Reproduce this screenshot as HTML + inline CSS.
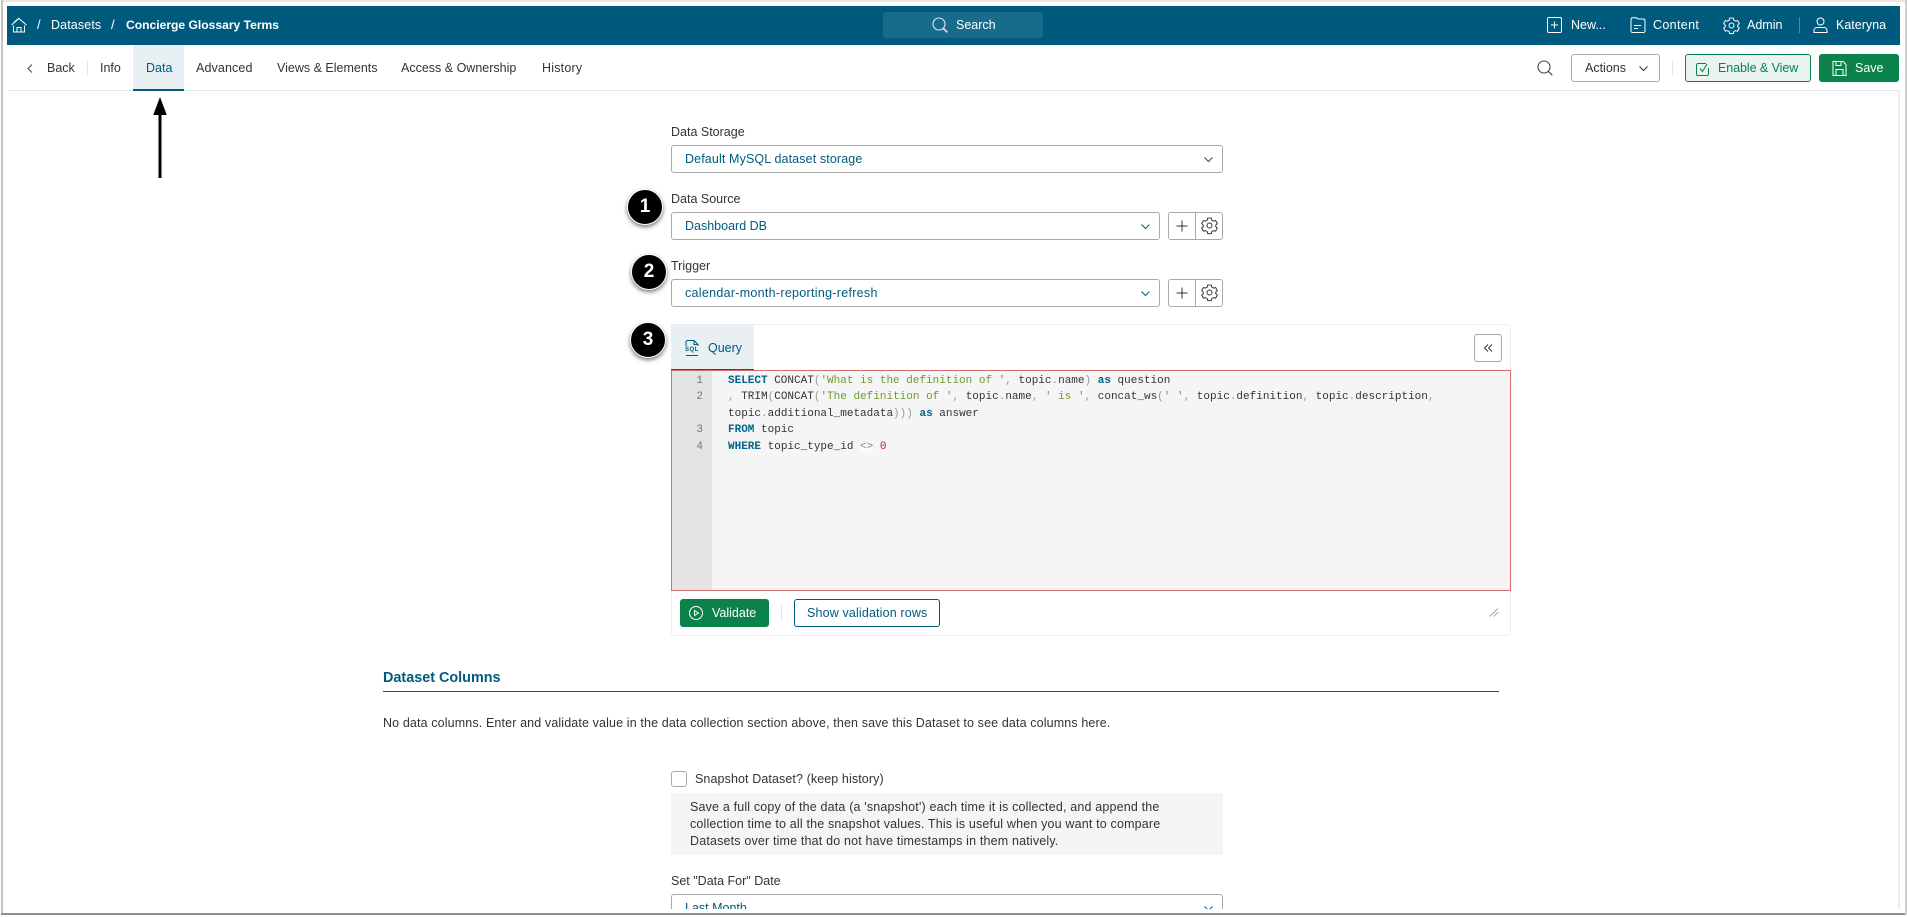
<!DOCTYPE html>
<html><head><meta charset="utf-8"><title>Concierge Glossary Terms</title>
<style>
html,body{margin:0;padding:0;width:1907px;height:917px;overflow:hidden;background:#fff}
body{position:relative;font-family:"Liberation Sans",sans-serif;font-size:13px;color:#333}
.a,.t{position:absolute;box-sizing:border-box}
.t{white-space:nowrap;line-height:16px;height:16px}
.w{color:#fff}.b{color:#005a7e}
.sel{position:absolute;box-sizing:border-box;background:#fff;border:1px solid #a9a9a9;border-radius:3px;height:28px}
svg{position:absolute;overflow:visible;fill:none}
.code{position:absolute;left:728px;font:11px/16.5px "Liberation Mono",monospace;color:#333;white-space:pre;height:16.5px}
.k{color:#00648c;font-weight:bold}.s{color:#6f9a2e}.p{color:#999}
.n{position:absolute;width:30px;left:673px;text-align:right;font:11px/16.5px "Liberation Mono",monospace;color:#777}
.badge{position:absolute;width:36px;height:36px;border-radius:50%;background:#000;border:1px solid #fff;box-sizing:border-box;box-shadow:0 2px 4px rgba(0,0,0,.55);color:#fff;font:bold 19px/34px "Liberation Sans",sans-serif;text-align:center}
</style></head><body>
<!-- frame -->
<div class="a" style="left:1px;top:0;width:1906px;height:2px;background:#e9e9e9"></div>
<div class="a" style="left:1px;top:0;width:2px;height:915px;background:#c4c4c4"></div>
<div class="a" style="left:1px;top:913px;width:1905px;height:2px;background:#8f8f8f"></div>
<div class="a" style="left:1905px;top:0;width:2px;height:915px;background:#d0d0d0"></div>
<div class="a" style="left:1898px;top:90px;width:2px;height:819px;background:#eeeeee"></div>

<!-- top bar -->
<div class="a" style="left:7px;top:6px;width:1893px;height:39px;background:#005a7e"></div>
<svg style="left:11px;top:17px" width="16" height="16" viewBox="0 0 16 16" stroke="#fff" stroke-width="1"><path d="M.5 8 8 1.500 15.500 8M2.500 8.500V15h11V8.500M6 15v-4.500h4V15M2.800 5.500 8 1"/></svg>
<div class="t w" style="left:37px;top:17px">/</div>
<div class="t w" style="left:51px;top:17px;font-size:12.500px;letter-spacing:.12px">Datasets</div>
<div class="t w" style="left:111px;top:17px">/</div>
<div class="t w" style="left:126px;top:17px;font-weight:bold;font-size:12.100px">Concierge Glossary Terms</div>
<div class="a" style="left:883px;top:12px;width:160px;height:26px;background:#196b8b;border-radius:3px"></div>
<svg style="left:932px;top:17px" width="16" height="16" viewBox="0 0 16 16" stroke="#dceaf0" stroke-width="1.100"><circle cx="7" cy="7" r="6"/><path d="m11.500 11.500 3.800 3.800" stroke-width="1.600"/></svg>
<div class="t w" style="left:956px;top:17px;font-size:12.500px">Search</div>

<svg style="left:1547px;top:17px" width="16" height="16" viewBox="0 0 16 16" stroke="#fff"><rect x=".5" y=".5" width="14" height="15" rx="1.500"/><path d="M7.500 4.500v7M4 8h7"/></svg>
<div class="t w" style="left:1571px;top:17px;font-size:12.500px">New...</div>
<svg style="left:1630px;top:17px" width="16" height="16" viewBox="0 0 16 16" stroke="#fff"><path d="M1 3.500V14a1.500 1.500 0 0 0 1.500 1.500h11A1.500 1.500 0 0 0 15 14V3.500a1.500 1.500 0 0 0-1.500-1.500H8L6.500.8H2.500A1.500 1.500 0 0 0 1 2.300zM4 8.500h7M4 11.500h4"/></svg>
<div class="t w" style="left:1653px;top:17px;font-size:12.500px;letter-spacing:.35px">Content</div>
<svg style="left:1723px;top:16.500px" width="17" height="17" viewBox="0 0 24 24" stroke="#fff" stroke-width="1.400"><circle cx="12" cy="12" r="3.500"/><path d="M9.500 1.500h5l.8 3 2.300 1.300 3-.8 2.400 4.300-2.200 2.200v2l2.200 2.200-2.400 4.300-3-.8-2.300 1.300-.8 3h-5l-.8-3-2.300-1.300-3 .8L1 15.700 3.200 13.500v-2L1 9.300 3.400 5l3 .8 2.300-1.300z"/></svg>
<div class="t w" style="left:1747px;top:17px;font-size:12.500px">Admin</div>
<div class="a" style="left:1799px;top:17px;width:1px;height:16px;background:#4f8aa3"></div>
<svg style="left:1813px;top:17px" width="15" height="16" viewBox="0 0 15 16" stroke="#fff"><circle cx="7.500" cy="4.500" r="3.500"/><path d="M1 15.500v-2c0-2 1.500-3 3-3h7c1.500 0 3 1 3 3v2z"/></svg>
<div class="t w" style="left:1836px;top:17px;font-size:12.500px">Kateryna</div>

<!-- tab row -->
<div class="a" style="left:7px;top:90px;width:1893px;height:1px;background:#e8e8e8"></div>
<div class="a" style="left:133px;top:45px;width:51px;height:46px;background:#e8f0f4;border-bottom:2px solid #005a7e"></div>
<svg style="left:27px;top:64px" width="6" height="9" viewBox="0 0 6 9" stroke="#444"><path d="M5 .5 1 4.500l4 4"/></svg>
<div class="t" style="left:47px;top:60px;font-size:12.500px">Back</div>
<div class="a" style="left:87px;top:60px;width:1px;height:16px;background:#e4e4e4"></div>
<div class="t" style="left:100px;top:60px;font-size:12.500px">Info</div>
<div class="t b" style="left:146px;top:60px;font-size:12.500px">Data</div>
<div class="t" style="left:196px;top:60px;font-size:12.500px;letter-spacing:.12px">Advanced</div>
<div class="t" style="left:277px;top:60px;font-size:12.500px">Views &amp; Elements</div>
<div class="t" style="left:401px;top:60px;font-size:12.500px">Access &amp; Ownership</div>
<div class="t" style="left:542px;top:60px;font-size:12.500px;letter-spacing:.2px">History</div>

<svg style="left:1537px;top:60px" width="16" height="16" viewBox="0 0 16 16" stroke="#444" stroke-width="1.100"><circle cx="7" cy="7" r="6"/><path d="m11.300 11.300 4 4"/></svg>
<div class="a" style="left:1571px;top:54px;width:89px;height:28px;border:1px solid #a9a9a9;border-radius:3px"></div>
<div class="t" style="left:1585px;top:60px;font-size:12.500px">Actions</div>
<svg style="left:1639px;top:66px" width="9" height="6" viewBox="0 0 9 6" stroke="#333"><path d="m.5.500 4 4 4-4"/></svg>
<div class="a" style="left:1672px;top:60px;width:1px;height:16px;background:#e4e4e4"></div>
<div class="a" style="left:1685px;top:54px;width:126px;height:28px;border:1px solid #0a824a;border-radius:3px;background:#e9f3ef"></div>
<svg style="left:1696px;top:62px" width="14" height="14" viewBox="0 0 14 14" stroke="#0a824a"><path d="M12.500 6v6a1.500 1.500 0 0 1-1.500 1.500H2A1.500 1.500 0 0 1 .5 12V3A1.500 1.500 0 0 1 2 1.500h8M4 6.500l2.500 3L11 2"/></svg>
<div class="t" style="left:1718px;top:60px;font-size:12.500px;color:#0a824a;letter-spacing:-.07px">Enable &amp; View</div>
<div class="a" style="left:1819px;top:54px;width:80px;height:28px;border-radius:3px;background:#0a824a"></div>
<svg style="left:1832px;top:61px" width="15" height="15" viewBox="0 0 15 15" stroke="#fff"><path d="M1 .5h10l3 3V14.500H1zM4 .5v4h5v-4M4 14.500V8.500h7v6"/></svg>
<div class="t w" style="left:1855px;top:60px;font-size:12.500px">Save</div>

<!-- arrow -->
<svg style="left:150px;top:95px" width="20" height="85"><path d="M10 2 16.800 20H3.200z" fill="#000"/><rect x="8.500" y="18" width="3" height="65" fill="#000"/></svg>

<!-- form -->
<div class="t" style="left:671px;top:124px;font-size:12.500px">Data Storage</div>
<div class="sel" style="left:671px;top:145px;width:552px"></div>
<div class="t b" style="left:685px;top:151px;font-size:12.500px;letter-spacing:.12px">Default MySQL dataset storage</div>
<svg style="left:1204px;top:157px" width="9" height="6" viewBox="0 0 9 6" stroke="#005a7e"><path d="m.5.500 4 4 4-4"/></svg>

<div class="t" style="left:671px;top:191px;font-size:12.500px">Data Source</div>
<div class="sel" style="left:671px;top:212px;width:489px"></div>
<div class="t b" style="left:685px;top:218px;font-size:12.500px">Dashboard DB</div>
<svg style="left:1141px;top:224px" width="9" height="6" viewBox="0 0 9 6" stroke="#005a7e"><path d="m.5.500 4 4 4-4"/></svg>
<div class="sel" style="left:1168px;top:212px;width:55px"></div>
<div class="a" style="left:1195px;top:212px;width:1px;height:28px;background:#a9a9a9"></div>
<svg style="left:1176px;top:220px" width="12" height="12" viewBox="0 0 12 12" stroke="#333"><path d="M6 .5v11M.5 6h11"/></svg>
<svg style="left:1201px;top:217px" width="17" height="17" viewBox="0 0 24 24" stroke="#333" stroke-width="1.400"><circle cx="12" cy="12" r="3.500"/><path d="M9.500 1.500h5l.8 3 2.300 1.300 3-.8 2.400 4.300-2.200 2.200v2l2.200 2.200-2.400 4.300-3-.8-2.300 1.300-.8 3h-5l-.8-3-2.300-1.300-3 .8L1 15.700 3.200 13.500v-2L1 9.300 3.400 5l3 .8 2.300-1.300z"/></svg>

<div class="t" style="left:671px;top:258px;font-size:12.500px">Trigger</div>
<div class="sel" style="left:671px;top:279px;width:489px"></div>
<div class="t b" style="left:685px;top:285px;font-size:12.500px;letter-spacing:.29px">calendar-month-reporting-refresh</div>
<svg style="left:1141px;top:291px" width="9" height="6" viewBox="0 0 9 6" stroke="#005a7e"><path d="m.5.500 4 4 4-4"/></svg>
<div class="sel" style="left:1168px;top:279px;width:55px"></div>
<div class="a" style="left:1195px;top:279px;width:1px;height:28px;background:#a9a9a9"></div>
<svg style="left:1176px;top:287px" width="12" height="12" viewBox="0 0 12 12" stroke="#333"><path d="M6 .5v11M.5 6h11"/></svg>
<svg style="left:1201px;top:284px" width="17" height="17" viewBox="0 0 24 24" stroke="#333" stroke-width="1.400"><circle cx="12" cy="12" r="3.500"/><path d="M9.500 1.500h5l.8 3 2.300 1.300 3-.8 2.400 4.300-2.200 2.200v2l2.200 2.200-2.400 4.300-3-.8-2.300 1.300-.8 3h-5l-.8-3-2.300-1.300-3 .8L1 15.700 3.200 13.500v-2L1 9.300 3.400 5l3 .8 2.300-1.300z"/></svg>

<!-- query panel -->
<div class="a" style="left:671px;top:324px;width:840px;height:312px;border:1px solid #eeeeee;border-radius:3px"></div>
<div class="a" style="left:671px;top:324px;width:83px;height:47px;background:#e8f0f4;border-bottom:2px solid #005a7e"></div>
<svg style="left:685px;top:340px" width="14" height="17" viewBox="0 0 14 17" stroke="#005a7e"><path d="M1 6V2a1.500 1.500 0 0 1 1.500-1.500H9L13 4.500V6M9 .5v4h4M1 15.500h12"/></svg>
<div class="t b" style="left:685px;top:346px;font:bold 6px/8px 'Liberation Sans',sans-serif;height:8px;letter-spacing:.5px">SQL</div>
<div class="t b" style="left:708px;top:340px;font-size:12.500px">Query</div>
<div class="a" style="left:1474px;top:334px;width:28px;height:28px;border:1px solid #a9a9a9;border-radius:3px"></div>
<svg style="left:1484px;top:344px" width="9" height="8" viewBox="0 0 9 8" stroke="#333"><path d="M4 .5.500 4 4 7.500M8 .5 4.500 4 8 7.500"/></svg>

<div class="a" style="left:671px;top:370px;width:840px;height:221px;border:1px solid #d46e6e;background:#f5f5f5"></div>
<div class="a" style="left:672px;top:371px;width:40px;height:219px;background:#e4e4e4"></div>
<div class="n" style="top:372.500px">1</div>
<div class="n" style="top:389px">2</div>
<div class="n" style="top:422px">3</div>
<div class="n" style="top:438.500px">4</div>
<div class="code" style="top:372.500px"><span class="k">SELECT</span> CONCAT<span class="p">(</span><span class="s">'What is the definition of '</span><span class="p">,</span> topic<span class="p">.</span>name<span class="p">)</span> <span class="k">as</span> question</div>
<div class="code" style="top:389px"><span class="p">,</span> TRIM<span class="p">(</span>CONCAT<span class="p">(</span><span class="s">'The definition of '</span><span class="p">,</span> topic<span class="p">.</span>name<span class="p">,</span> <span class="s">' is '</span><span class="p">,</span> concat_ws<span class="p">(</span><span class="s">' '</span><span class="p">,</span> topic<span class="p">.</span>definition<span class="p">,</span> topic<span class="p">.</span>description<span class="p">,</span></div>
<div class="code" style="top:405.500px">topic<span class="p">.</span>additional_metadata<span class="p">)))</span> <span class="k">as</span> answer</div>
<div class="code" style="top:422px"><span class="k">FROM</span> topic</div>
<div class="code" style="top:438.500px"><span class="k">WHERE</span> topic_type_id <span style="color:#a67f59;background:#fafafa">&lt;&gt;</span> <span style="color:#c2185b">0</span></div>

<div class="a" style="left:680px;top:599px;width:89px;height:28px;border-radius:3px;background:#0a824a"></div>
<svg style="left:689px;top:606px" width="14" height="14" viewBox="0 0 14 14" stroke="#fff"><circle cx="7" cy="7" r="6.500"/><path d="M5.500 4.500 9.500 7l-4 2.500z"/></svg>
<div class="t w" style="left:712px;top:605px;font-size:12.500px">Validate</div>
<div class="a" style="left:781px;top:605px;width:1px;height:16px;background:#e4e4e4"></div>
<div class="a" style="left:794px;top:599px;width:146px;height:28px;border:1px solid #005a7e;border-radius:3px"></div>
<div class="t b" style="left:807px;top:605px;font-size:12.500px;letter-spacing:.15px">Show validation rows</div>
<svg style="left:1489px;top:608px" width="10" height="9" viewBox="0 0 10 9" stroke="#aaa"><path d="M.5 8.500 9 .5M4.500 8.500 9.500 4"/></svg>

<!-- dataset columns -->
<div class="t b" style="left:383px;top:670px;font-weight:bold;font-size:14.400px">Dataset Columns</div>
<div class="a" style="left:383px;top:691px;width:1116px;height:1px;background:#005a7e"></div>
<div class="t" style="left:383px;top:715px;font-size:12.500px;letter-spacing:.13px">No data columns. Enter and validate value in the data collection section above, then save this Dataset to see data columns here.</div>

<div class="a" style="left:671px;top:771px;width:16px;height:16px;border:1px solid #a9a9a9;border-radius:3px"></div>
<div class="t" style="left:695px;top:771px;font-size:12.500px;letter-spacing:.1px">Snapshot Dataset? (keep history)</div>
<div class="a" style="left:671px;top:793px;width:552px;height:62px;background:#f5f5f5"></div>
<div class="t" style="left:690px;top:799px;font-size:12.500px;letter-spacing:.17px">Save a full copy of the data (a 'snapshot') each time it is collected, and append the</div>
<div class="t" style="left:690px;top:816px;font-size:12.500px;letter-spacing:.17px">collection time to all the snapshot values. This is useful when you want to compare</div>
<div class="t" style="left:690px;top:833px;font-size:12.500px;letter-spacing:.17px">Datasets over time that do not have timestamps in them natively.</div>
<div class="t" style="left:671px;top:873px;font-size:12.500px">Set "Data For" Date</div>
<div class="a" style="left:671px;top:894px;width:552px;height:15px;overflow:hidden">
  <div class="sel" style="left:0;top:0;width:552px"></div>
  <div class="t b" style="left:14px;top:6px;font-size:12.500px">Last Month</div>
  <svg style="left:533px;top:12px" width="9" height="6" viewBox="0 0 9 6" stroke="#005a7e"><path d="m.5.500 4 4 4-4"/></svg>
</div>

<!-- badges -->
<div class="badge" style="left:627px;top:189px">1</div>
<div class="badge" style="left:631px;top:254px">2</div>
<div class="badge" style="left:630px;top:322px">3</div>
</body></html>
